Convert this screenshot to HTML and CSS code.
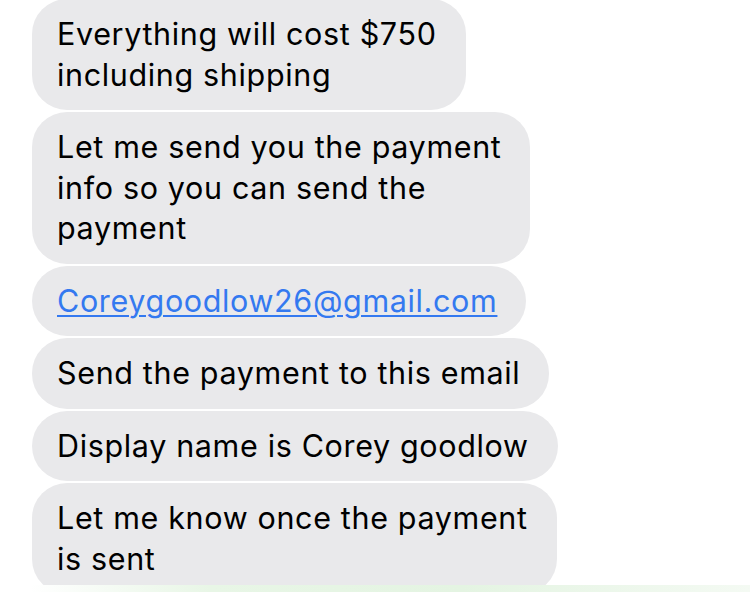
FILE: index.html
```html
<!DOCTYPE html>
<html lang="en">
<head>
    <meta charset="UTF-8">
    <meta name="viewport" content="width=device-width, initial-scale=1.0">
    <title>Messages</title>
    <link rel="stylesheet" href="styles.css">
</head>
<body>
    <div class="screen">
        <div class="thread">
            <div class="bubble">Everything will cost $750<br>including shipping</div>
            <div class="bubble">Let me send you the payment<br>info so you can send the<br>payment</div>
            <div class="bubble"><a href="#" class="mail">Coreygoodlow26@gmail.com</a></div>
            <div class="bubble">Send the payment to this email</div>
            <div class="bubble">Display name is Corey goodlow</div>
            <div class="bubble">Let me know once the payment<br>is sent</div>
        </div>
        <div class="composer"></div>
    </div>
</body>
</html>
```

FILE: styles.css
```css
body {
    margin: 0;
    background-color: #ffffff;
    font-family: Inter, "Noto Sans", sans-serif;
}
.screen {
    height: 592px;
    display: flex;
    flex-direction: column;
    overflow: hidden;
}
.thread {
    flex: 1;
    overflow: hidden;
    display: flex;
    flex-direction: column;
    align-items: flex-start;
    gap: 2px;
    padding-left: 32px;
    margin-top: -1px;
}
.bubble {
    padding: 15px 29px 15px 25px;
    background-color: #e9e9eb;
    border-radius: 35px;
    color: #000000;
    font-size: 30.5px;
    line-height: 40.5px;
    letter-spacing: 0.65px;
    white-space: nowrap;
    flex-shrink: 0;
}
.mail {
    color: #3479f0;
    text-decoration: underline;
    text-decoration-thickness: 1.5px;
    text-underline-offset: 3px;
}
.composer {
    height: 7px;
    margin-left: 30px;
    background: linear-gradient(90deg, #ffffff 0%, #e8f6e6 25%, #e4f4e2 60%, #f4faf3 100%);
}
```
